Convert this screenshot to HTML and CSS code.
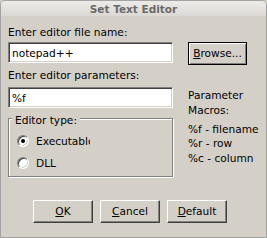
FILE: index.html
```html
<!DOCTYPE html>
<html>
<head>
<meta charset="utf-8">
<link rel="stylesheet" href="styles.css">
</head>
<body>
<div class="window">
  <div class="titlebar">Set Text Editor</div>
  <div class="body">
    <div class="label">Enter editor file name:</div>
    <div class="row">
      <input class="field" type="text" value="notepad++">
      <button class="btn btn-default"><span class="u">B</span>rowse...</button>
    </div>
    <div class="label label-2">Enter editor parameters:</div>
    <div class="lower">
      <div class="left">
        <input class="field" type="text" value="%f">
        <fieldset class="group">
          <legend class="legend">Editor type:</legend>
          <div class="radio-row"><span class="radio checked"></span><span class="radio-label">Executable</span></div>
          <div class="radio-row"><span class="radio"></span><span class="radio-label">DLL</span></div>
        </fieldset>
      </div>
      <div class="right">
        <p class="macros-title">Parameter<br>Macros:</p>
        <p class="macros">%f - filename<br>%r - row<br>%c - column</p>
      </div>
    </div>
    <div class="buttons">
      <button class="btn"><span class="u">O</span>K</button>
      <button class="btn"><span class="u">C</span>ancel</button>
      <button class="btn"><span class="u">D</span>efault</button>
    </div>
  </div>
</div>
</body>
</html>
```

FILE: styles.css
```css
html, body {
  margin: 0;
  padding: 0;
  background: #d4d0c8;
}

.window {
  width: 267px;
  height: 238px;
  box-sizing: border-box;
  border: 1px solid #a3a3a3;
  border-radius: 5px 5px 0 0;
  background: #d4d0c8;
  overflow: hidden;
  font-family: "DejaVu Sans", sans-serif;
  font-size: 10.6px;
  color: #000;
}

.titlebar {
  height: 15px;
  line-height: 17px;
  text-align: center;
  font-weight: bold;
  font-size: 10.5px;
  color: #6a6a6a;
  background: linear-gradient(#ecebe8, #dcd9d4);
  overflow: visible;
}

.body {
  padding: 10px 7px 0 7px;
}

.label {
  line-height: 13px;
  height: 13px;
  margin-bottom: 3px;
}

.label-2 {
  margin-top: 4px;
  margin-bottom: 5px;
}

.row {
  display: flex;
  align-items: flex-start;
  gap: 15px;
  height: 23px;
}

.field {
  display: block;
  box-sizing: border-box;
  width: 165px;
  height: 21px;
  margin: 0;
  padding: 0 3px;
  border: 1px solid;
  border-color: #808080 #ffffff #ffffff #808080;
  box-shadow: inset 1px 1px 0 #404040, inset -1px -1px 0 #d4d0c8;
  background: #fff;
  font-family: "DejaVu Sans", sans-serif;
  font-size: 10.6px;
  color: #000;
  outline: none;
}

.btn {
  box-sizing: border-box;
  width: 60px;
  height: 23px;
  margin: 0;
  padding: 0;
  border: 1px solid;
  border-color: #ffffff #404040 #404040 #ffffff;
  box-shadow: inset -1px -1px 0 #808080;
  background: #d4d0c8;
  font-family: "DejaVu Sans", sans-serif;
  font-size: 10.6px;
  color: #000;
  line-height: 13px;
}

.btn-default {
  width: 59px;
  border: 1px solid #000;
  box-shadow: inset 1px 1px 0 #fff, inset -1px -1px 0 #808080;
}

.u {
  text-decoration: underline;
  text-underline-offset: 1px;
}

.lower {
  display: flex;
  gap: 15px;
}

.left {
  width: 165px;
}

.group {
  margin: 2px 0 0 0;
  padding: 3px 0 2px 0;
  min-inline-size: 0;
  box-sizing: border-box;
  width: 165px;
  border: 1px solid #808080;
  box-shadow: 1px 1px 0 #fff, inset 1px 1px 0 #fff;
}

.legend {
  margin-left: 3px;
  padding: 4px 3px 0 3px;
  line-height: 13px;
  background: #d4d0c8;
}

.radio-row {
  display: flex;
  align-items: center;
  height: 22px;
  padding-left: 8px;
}

.radio {
  position: relative;
  box-sizing: border-box;
  width: 12px;
  height: 12px;
  flex: none;
  border-radius: 50%;
  border: 1px solid;
  border-color: #808080 #ffffff #ffffff #808080;
  box-shadow: inset 1px 1px 0 #404040, inset -1px -1px 0 #d4d0c8;
  background: #fff;
}

.radio.checked::after {
  content: "";
  position: absolute;
  left: 3px;
  top: 3px;
  width: 4px;
  height: 4px;
  border-radius: 50%;
  background: #000;
}

.radio-label {
  margin-left: 7px;
  width: 54px;
  overflow: hidden;
  white-space: nowrap;
  line-height: 13px;
}

.right {
  padding-top: 1px;
}

.macros-title {
  margin: 0;
  line-height: 14.5px;
}

.macros {
  margin: 5px 0 0 0;
  line-height: 14.3px;
}

.buttons {
  display: flex;
  gap: 7px;
  margin-top: 23px;
  margin-left: 25px;
}
```
